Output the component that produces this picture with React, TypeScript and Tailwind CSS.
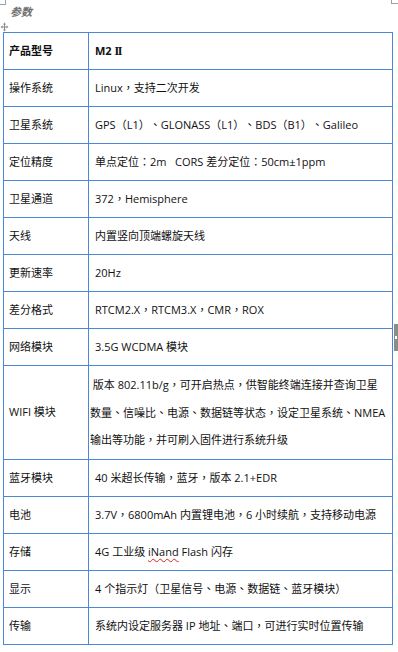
import React from "react";

const PUNCT = /([，：（）、])/;

function T({ s }: { s: string }) {
  const parts = s.split(PUNCT);
  return (
    <span>
      {parts.map((p, i) =>
        PUNCT.test(p) ? (
          <span key={i} className="font-['Noto_Sans_CJK_TC']">
            {p}
          </span>
        ) : (
          <React.Fragment key={i}>{p}</React.Fragment>
        )
      )}
    </span>
  );
}

const rows: { k: string; v: React.ReactNode; bold?: boolean }[] = [
  {
    k: "产品型号",
    v: (
      <span>
        M2 <span className="font-['Liberation_Serif'] text-[12px] tracking-[-1.5px]">II</span>
      </span>
    ),
    bold: true,
  },
  { k: "操作系统", v: <T s="Linux，支持二次开发" /> },
  { k: "卫星系统", v: <T s="GPS（L1）、GLONASS（L1）、BDS（B1）、Galileo" /> },
  { k: "定位精度", v: <T s={"单点定位：2m\u00a0\u00a0\u00a0CORS 差分定位：50cm±1ppm"} /> },
  { k: "卫星通道", v: <T s="372，Hemisphere" /> },
  { k: "天线", v: <T s="内置竖向顶端螺旋天线" /> },
  { k: "更新速率", v: <T s="20Hz" /> },
  { k: "差分格式", v: <T s="RTCM2.X，RTCM3.X，CMR，ROX" /> },
  { k: "网络模块", v: <T s="3.5G WCDMA 模块" /> },
];

const rows2: { k: string; v: React.ReactNode }[] = [
  { k: "蓝牙模块", v: <T s="40 米超长传输，蓝牙，版本 2.1+EDR" /> },
  { k: "电池", v: <T s="3.7V，6800mAh 内置锂电池，6 小时续航，支持移动电源" /> },
  {
    k: "存储",
    v: (
      <span>
        {"4G 工业级 "}
        <span className="underline decoration-wavy decoration-[#e02020] decoration-1 underline-offset-2">iNand</span>
        {" Flash 闪存"}
      </span>
    ),
  },
  { k: "显示", v: <T s="4 个指示灯（卫星信号、电源、数据链、蓝牙模块）" /> },
  { k: "传输", v: <T s="系统内设定服务器 IP 地址、端口，可进行实时位置传输" /> },
];

function Row({ k, v, bold }: { k: string; v: React.ReactNode; bold?: boolean }) {
  return (
    <div className="flex h-[37px] border-b border-[#4a87d6]">
      <div className={`w-[85px] shrink-0 border-r border-[#4a87d6] pl-[5px] flex items-center ${bold ? "font-bold" : ""}`}>
        <span>{k}</span>
      </div>
      <div className={`flex-1 pl-[6px] flex items-center whitespace-nowrap ${bold ? "font-bold" : ""}`}>{v}</div>
    </div>
  );
}

export default function App() {
  return (
    <div
      className="relative w-[398px] h-[652px] bg-white text-[#111] overflow-hidden [text-spacing-trim:space-all]"
      style={{ fontFamily: '"Open Sans", "Noto Sans CJK SC", sans-serif', fontSize: "11px" }}
    >
      {/* corner marks */}
      <div className="absolute left-0 top-0 w-[6px] h-[5px] border-r border-b border-[#a0a0a0]" />
      <div className="absolute left-[391px] top-0 w-[7px] h-[4px] border-l border-b border-[#a0a0a0]" />
      {/* move handle */}
      <svg className="absolute left-0 top-[22px]" width="9" height="10" viewBox="0 0 9 10">
        <path d="M4.5 0.5 L3 2.5 H6 Z M4.5 9.5 L3 7.5 H6 Z M0.5 5 L2.5 3.5 V6.5 Z M8.5 5 L6.5 3.5 V6.5 Z" fill="#8a8a8a" />
        <path d="M4.5 2 V8 M2 5 H7" stroke="#8a8a8a" strokeWidth="1" />
      </svg>
      {/* side tab */}
      <div className="absolute left-[394px] top-[324px] w-[4px] h-[27px] bg-[#8c8c8c] flex items-center justify-center">
        <div className="w-[2px] h-[3px] bg-white" />
      </div>

      <div className="pl-[10px] pt-[5px] h-[32px] italic font-semibold text-[#6e6e6e] text-[11px] leading-[14px]">参数</div>

      <div className="ml-[3px] w-[390px] border-l border-t border-r border-[#4a87d6]">
        {rows.map((r) => (
          <Row key={r.k} {...r} />
        ))}
        <div className="flex h-[94px] border-b border-[#4a87d6]">
          <div className="w-[85px] shrink-0 border-r border-[#4a87d6] pl-[5px] flex items-center">
            <span>WIFI 模块</span>
          </div>
          <div className="flex-1 pl-[1px] flex flex-col justify-center leading-[27.5px] whitespace-nowrap">
            <div>
              <T s={"\u00a0版本 802.11b/g，可开启热点，供智能终端连接并查询卫星"} />
            </div>
            <div>
              <T s="数量、信噪比、电源、数据链等状态，设定卫星系统、NMEA" />
            </div>
            <div>
              <T s="输出等功能，并可刷入固件进行系统升级" />
            </div>
          </div>
        </div>
        {rows2.map((r) => (
          <Row key={r.k} {...r} />
        ))}
      </div>
    </div>
  );
}
